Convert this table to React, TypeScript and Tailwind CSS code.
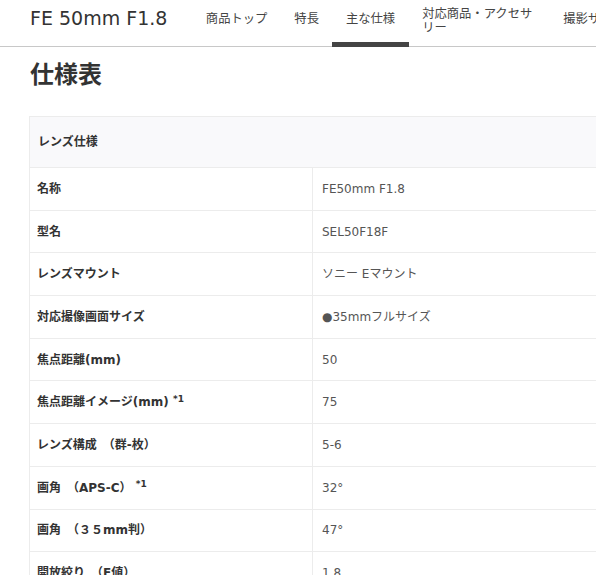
import { ReactNode } from 'react';

const font = { fontFamily: '"DejaVu Sans", "Noto Sans CJK JP", sans-serif' };
const jp = { fontFamily: '"Noto Sans CJK JP", sans-serif' };

const rows: { label: ReactNode; value: string }[] = [
  { label: '名称', value: 'FE50mm F1.8' },
  { label: '型名', value: 'SEL50F18F' },
  { label: 'レンズマウント', value: 'ソニー Eマウント' },
  { label: '対応撮像画面サイズ', value: '●35mmフルサイズ' },
  { label: '焦点距離(mm)', value: '50' },
  {
    label: (
      <>
        焦点距離イメージ(mm) <sup className="text-[9px]">*1</sup>
      </>
    ),
    value: '75',
  },
  { label: 'レンズ構成　（群-枚）', value: '5-6' },
  {
    label: (
      <>
        画角　（APS-C） <sup className="text-[9px]">*1</sup>
      </>
    ),
    value: '32°',
  },
  { label: '画角　（３５mm判）', value: '47°' },
  { label: '開放絞り　（F値）', value: '1.8' },
];

const navItems = ['商品トップ', '特長', '主な仕様', '対応商品・アクセサリー', '撮影サンプル'];

export default function App() {
  return (
    <div className="w-[596px] h-[575px] overflow-hidden bg-white text-[#333]" style={font}>
      {/* Header nav */}
      <nav className="h-[47px] border-b border-[#c8c8c8] flex items-stretch pl-[30px] whitespace-nowrap">
        <div className="flex items-center pb-[9px] text-[19px] text-[#333] mr-[25px]">FE 50mm F1.8</div>
        {navItems.map((item, i) => (
          <div
            key={item}
            className="relative flex items-center pb-[9px] px-[13.5px] text-[12.3px] text-[#444]"
            style={jp}
          >
            <span className={i === 3 ? 'w-[114px] whitespace-normal leading-[14px] pt-[2px]' : ''}>{item}</span>
            {i === 2 && <div className="absolute left-0 right-0 bottom-[-1px] h-[5px] bg-[#444]"></div>}
          </div>
        ))}
      </nav>

      <h1 className="mt-[8px] ml-[30px] text-[24px] leading-[36px] font-bold text-[#333]" style={jp}>
        仕様表
      </h1>

      {/* Spec table */}
      <div className="mt-[25px] ml-[29px] w-[620px]">
        <div className="h-[52px] bg-[#f9f9fb] border border-[#ececec] flex items-center px-[8px] text-[12px] font-bold">
          レンズ仕様
        </div>
        {rows.map((row, i) => (
          <div key={i} className="h-[42.7px] flex border-x border-b border-[#ececec] text-[12px]">
            <div className="w-[283px] shrink-0 border-r border-[#ececec] flex items-center px-[7px] font-bold text-[#333]">
              <span>{row.label}</span>
            </div>
            <div className="flex items-center px-[9px] text-[#555]">{row.value}</div>
          </div>
        ))}
      </div>
    </div>
  );
}
